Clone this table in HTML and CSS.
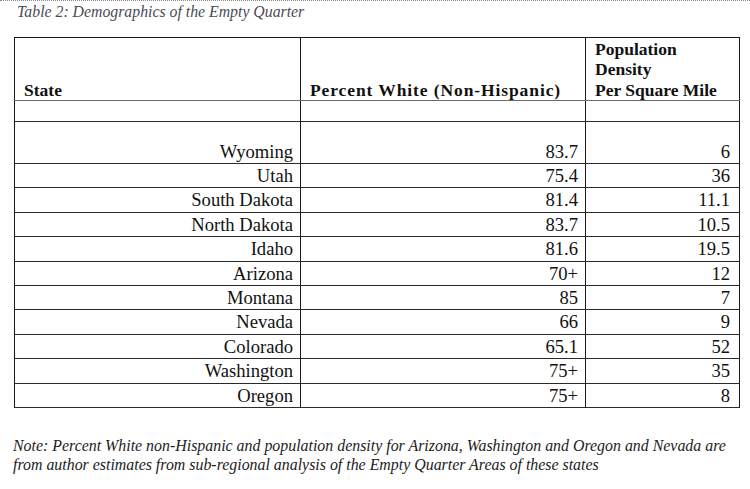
FILE: index.html
```html
<!DOCTYPE html>
<html>
<head>
<meta charset="utf-8">
<link rel="stylesheet" href="styles.css">
</head>
<body>
<div class="page">
  <p class="caption">Table 2: Demographics of the Empty Quarter</p>
  <table class="data">
    <colgroup>
      <col class="c1"><col class="c2"><col class="c3">
    </colgroup>
    <thead>
      <tr class="head">
        <th class="state">State</th>
        <th class="pct">Percent White (Non-Hispanic)</th>
        <th class="dens">Population<br>Density<br>Per Square Mile</th>
      </tr>
    </thead>
    <tbody>
      <tr class="spacer"><td></td><td></td><td></td></tr>
      <tr class="first"><td>Wyoming</td><td>83.7</td><td>6</td></tr>
      <tr><td>Utah</td><td>75.4</td><td>36</td></tr>
      <tr><td>South Dakota</td><td>81.4</td><td>11.1</td></tr>
      <tr><td>North Dakota</td><td>83.7</td><td>10.5</td></tr>
      <tr><td>Idaho</td><td>81.6</td><td>19.5</td></tr>
      <tr><td>Arizona</td><td>70+</td><td>12</td></tr>
      <tr><td>Montana</td><td>85</td><td>7</td></tr>
      <tr><td>Nevada</td><td>66</td><td>9</td></tr>
      <tr><td>Colorado</td><td>65.1</td><td>52</td></tr>
      <tr><td>Washington</td><td>75+</td><td>35</td></tr>
      <tr><td>Oregon</td><td>75+</td><td>8</td></tr>
    </tbody>
  </table>
  <p class="note">Note: Percent White non-Hispanic and population density for Arizona, Washington and Oregon and Nevada are<br>from author estimates from sub-regional analysis of the Empty Quarter Areas of these states</p>
</div>
</body>
</html>
```

FILE: styles.css
```css
html, body {
  margin: 0;
  padding: 0;
  background: #ffffff;
}

.page {
  border-top: 1px dotted #8a8a8a;
  padding: 0 0 0 14px;
  font-family: "Liberation Serif", "Times New Roman", serif;
  color: #111;
}

.caption {
  margin: 1px 0 0 3px;
  font-size: 15.8px;
  line-height: 20px;
  font-style: italic;
  color: #4b4b55;
}

.data {
  margin-top: 15px;
  border-collapse: collapse;
  table-layout: fixed;
  width: 725px;
  border: 1px solid #1a1a1a;
}

.c1 { width: 286px; }
.c2 { width: 285px; }
.c3 { width: 154px; }

.data th,
.data td {
  border-left: 1px solid #1a1a1a;
  border-right: 1px solid #1a1a1a;
  border-bottom: 1px solid #2a2a2a;
  padding: 0 7px 0 9px;
  vertical-align: bottom;
}

.data th {
  font-weight: bold;
  font-size: 17.5px;
  line-height: 20.5px;
  text-align: left;
  height: 62px;
  padding-bottom: 0;
}

.head th {
  border-bottom: 1px solid #6a6a6a;
}

.data th.pct {
  letter-spacing: 0.9px;
}

.data td {
  font-size: 18.6px;
  line-height: 23.4px;
  height: 23.4px;
  text-align: right;
}

.data .spacer td {
  height: 20px;
  line-height: 20px;
}

.data .first td {
  height: 41px;
}

.data td:last-child {
  padding-right: 9px;
}

.note {
  margin: 28px 0 0 -1px;
  font-size: 15.9px;
  line-height: 19px;
  font-style: italic;
  color: #1c1c1c;
  white-space: nowrap;
}
```
